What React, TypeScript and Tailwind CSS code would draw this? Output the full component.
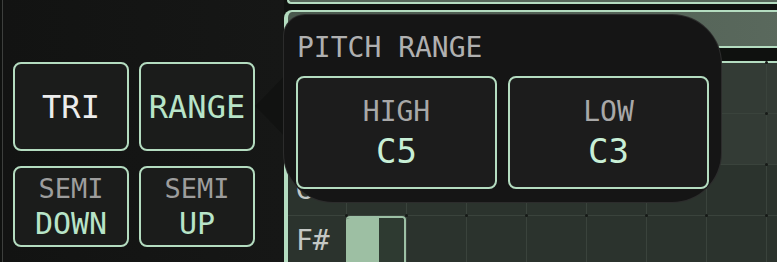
const mint = "border-[#b4dcc0]";

function PadButton({ children }: { children: React.ReactNode }) {
  return (
    <div className={`flex flex-col items-center justify-center rounded-[8px] border-2 ${mint} bg-[#1b1c1b]`}>
      {children}
    </div>
  );
}

const rows = [
  { label: "A#", shade: "bg-[#333b35]" },
  { label: "A", shade: "bg-[#333b35]" },
  { label: "G#", shade: "bg-[#2b332d]" },
  { label: "F#", shade: "bg-[#2b332d]", note: 0 },
];

function Grid() {
  return (
    <div className={`flex flex-1 flex-col border-t-2 border-l-4 ${mint} bg-[#2b332d]`}>
      {rows.map((row) => (
        <div key={row.label} className={`grid h-[51px] shrink-0 grid-cols-[58px_repeat(8,60px)] border-b border-[#3a433c] ${row.shade}`}>
          <div className="flex items-center pl-[8px] text-[28px] leading-none text-[#c4c8c5]">{row.label}</div>
          {Array.from({ length: 8 }).map((_, i) => (
            <div key={i} className="relative border-l border-[#3a433c]">
              <span className="absolute -top-[2px] -left-[2px] h-[3px] w-[3px] rounded-full bg-[#161a17]" />
              {row.note === i && (
                <div className="absolute inset-0 -left-px flex overflow-hidden rounded-t-[4px] border-t-2 border-r-2 border-[#9cc0a5]">
                  <div className="w-[33px] bg-[#9dbfa3]" />
                  <div className="flex-1 bg-[#2e3a31]" />
                </div>
              )}
            </div>
          ))}
        </div>
      ))}
    </div>
  );
}

export default function App() {
  return (
    <div className="relative flex h-[262px] w-[777px] overflow-hidden bg-[#0f110f] font-['DejaVu_Sans_Mono',monospace]">
      {/* left pad panel */}
      <div className="ml-[2px] w-[282px] shrink-0 border-l border-[#3d3f3d] bg-gradient-to-r from-[#121312] to-[#161716] pt-[62px] pl-[10px]">
        <div className="grid grid-cols-[116px_116px] grid-rows-[89px_81px] gap-x-[10px] gap-y-[15px]">
          <PadButton>
            <span className="text-[32px] leading-none text-[#ececec]">TRI</span>
          </PadButton>
          <PadButton>
            <span className="text-[32px] leading-none text-[#b8e4c8]">RANGE</span>
          </PadButton>
          <PadButton>
            <div className="flex flex-col items-center gap-[7px] leading-none">
              <span className="text-[27px] text-[#9d9d9d]">SEMI</span>
              <span className="text-[30px] text-[#b8e4c8]">DOWN</span>
            </div>
          </PadButton>
          <PadButton>
            <div className="flex flex-col items-center gap-[7px] leading-none">
              <span className="text-[27px] text-[#9d9d9d]">SEMI</span>
              <span className="text-[30px] text-[#b8e4c8]">UP</span>
            </div>
          </PadButton>
        </div>
      </div>

      {/* piano roll */}
      <div className="flex flex-1 flex-col">
        <div className={`ml-[3px] h-[4px] shrink-0 rounded-bl-md border-b-2 border-l-2 ${mint} bg-[#56665a]`} />
        <div className={`mt-[6px] h-[38px] shrink-0 rounded-tl-lg border-y-2 border-l-4 ${mint} bg-gradient-to-r from-[#4a594e] to-[#5b6a5e]`} />
        <div className="mt-[13px] flex flex-1">
          <Grid />
        </div>
      </div>

      {/* popover tail */}
      <svg className="absolute top-[66px] left-[253px]" width="40" height="80" viewBox="0 0 40 80">
        <path d="M40 0 C28 14 14 28 2 40 C14 52 28 66 40 80 Z" fill="#111211" />
      </svg>

      {/* pitch range popover */}
      <div className="absolute top-[14px] left-[283px] flex h-[189px] w-[439px] flex-col rounded-tl-[22px] rounded-tr-[50px] rounded-br-[50px] rounded-bl-[50px] border border-white/10 bg-[#151515] px-[12px] pt-[19px]">
        <div className="pl-[1px] text-[28px] leading-none text-[#b0b0b0]">PITCH RANGE</div>
        <div className="mt-[14px] grid grid-cols-2 gap-[11px]">
          {[
            ["HIGH", "C5"],
            ["LOW", "C3"],
          ].map(([k, v]) => (
            <div key={k} className={`flex h-[113px] flex-col items-center justify-center gap-[8px] rounded-[8px] border-2 ${mint} bg-[#1c1c1c] leading-none`}>
              <span className="text-[28px] text-[#a8a8a8]">{k}</span>
              <span className="text-[34px] text-[#c8efd6]">{v}</span>
            </div>
          ))}
        </div>
      </div>
    </div>
  );
}
